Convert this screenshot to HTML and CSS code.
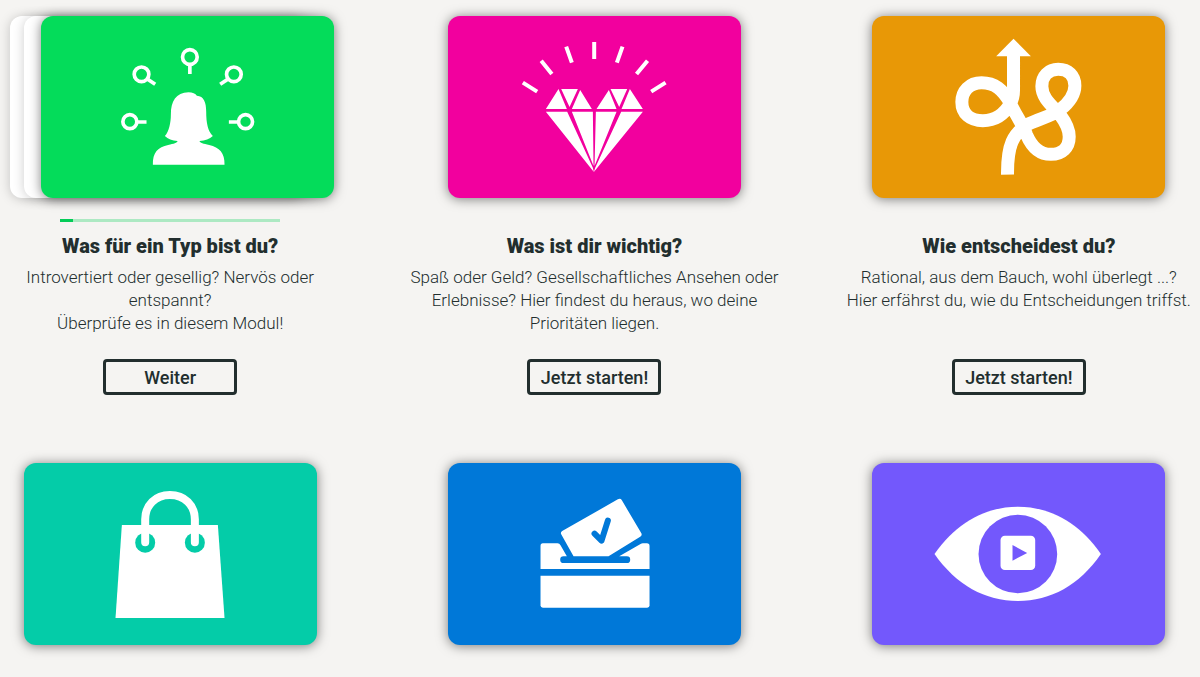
FILE: index.html
```html
<!doctype html>
<html lang="de">
<head>
    <meta charset="utf-8">
    <title>Module</title>
    <meta name="viewport" content="width=device-width, initial-scale=1">
    <link rel="stylesheet" href="styles.css">
</head>

<body>

<main class="modules">

    <section class="module">
        <div class="stack">
            <div class="sheet sheet-back"></div>
            <div class="sheet sheet-middle"></div>
            <div class="card card-type">
                <svg viewBox="123 48 876 546" aria-hidden="true">
                    <g fill="none" stroke="#fff" stroke-width="11">
                        <circle cx="568" cy="171" r="22"/>
                        <path d="M568 192V222"/>
                        <circle cx="423" cy="223" r="22"/>
                        <path d="M439 236L464 253"/>
                        <circle cx="700" cy="223" r="22"/>
                        <path d="M684 236L659 253"/>
                        <circle cx="388" cy="365" r="21"/>
                        <path d="M409 366H438"/>
                        <circle cx="735" cy="365" r="21"/>
                        <path d="M714 366H685"/>
                    </g>
                    <path fill="#fff" d="M457 494C456 458 472 441 503 435C520 431 530 429 531 423C515 422 502 417 493 408C505 394 511 368 511 344C511 304 526 278 564 277C576 277 585 281 589 287C610 288 617 307 617 335C617 369 622 393 637 408C627 417 614 422 597 423C598 429 609 431 626 435C657 442 673 459 672 494Z"/>
                </svg>
            </div>
        </div>
        <div class="progress" role="progressbar" aria-label="Fortschritt" aria-valuemin="0" aria-valuemax="100" aria-valuenow="6">
            <div class="progress-bar" style="width: 6%"></div>
        </div>
        <h2>Was für ein Typ bist du?</h2>
        <p>Introvertiert oder gesellig? Nervös oder entspannt?<br>Überprüfe es in diesem Modul!</p>
        <button type="button">Weiter</button>
    </section>

    <section class="module">
        <div class="card card-values">
            <svg viewBox="27 48 876 546" aria-hidden="true">
                <path fill="none" stroke="#fff" stroke-width="12" d="M464 126V177M380 140L397 188M549 140L532 188M305 182L337 222M624 182L591 222M250 248L293 275M678 248L635 275"/>
                <g fill="#fff">
                    <path d="M319 327L357 267L382 327ZM365 267H415L390 321ZM422 270L457 327H397ZM471 327L508 270L531 327ZM513 267H563L539 321ZM571 267L610 327H546Z"/>
                    <path d="M319 335H383L460 503L463 516ZM397 335H460L462 498ZM469 335H531L465 498ZM545 335H610L463 516L467 503Z"/>
                </g>
            </svg>
        </div>
        <div class="spacer"></div>
        <h2>Was ist dir wichtig?</h2>
        <p>Spaß oder Geld? Gesellschaftliches Ansehen oder Erlebnisse? Hier findest du heraus, wo deine Prioritäten liegen.</p>
        <button type="button">Jetzt starten!</button>
    </section>

    <section class="module">
        <div class="card card-decide">
            <svg viewBox="27 48 876 546" aria-hidden="true">
                <path fill="none" stroke="#fff" stroke-width="39" d="M432 524C431 436 448 399 497 371C530 355 562 349 590 329C620 305 634 282 634 257C634 227 614 208 584 208C555 208 535 228 535 259C535 296 568 318 590 345C608 369 617 387 617 410C617 442 596 463 562 463C526 463 504 439 489 404C478 374 454 341 440 308C417 268 394 248 354 248C318 248 295 273 295 306C295 341 320 362 358 362C397 362 424 340 440 311C447 299 450 289 450 270V160"/>
                <path fill="#fff" d="M450 116L502 169H398Z"/>
            </svg>
        </div>
        <div class="spacer"></div>
        <h2>Wie entscheidest du?</h2>
        <p>Rational, aus dem Bauch, wohl überlegt ...?<br>Hier erfährst du, wie du Entscheidungen triffst.</p>
        <button type="button">Jetzt starten!</button>
    </section>

    <section class="module">
        <div class="card card-shopping">
            <svg viewBox="42 39 876 546" aria-hidden="true">
                <path fill="#fff" d="M334 225H622L642 504H315Z"/>
                <circle cx="404" cy="278" r="30" fill="#04cca8"/>
                <circle cx="553" cy="278" r="30" fill="#04cca8"/>
                <path fill="#fff" d="M374 225H434V250H374ZM523 225H583V250H523Z"/>
                <path fill="none" stroke="#fff" stroke-width="24" stroke-linecap="round" d="M404 277V208C404 165 435 135 478 135C522 135 553 165 553 208V277"/>
            </svg>
        </div>
    </section>

    <section class="module">
        <div class="card card-vote">
            <svg viewBox="27 39 876 546" aria-hidden="true">
                <path fill="#fff" d="M310 280H354Q360 280 363 286L382 319H372A10 10 0 0 0 372 339H562A10 10 0 0 0 562 319H539L603 282Q606 280 610 280H622Q630 280 630 288V357H303V288Q303 280 310 280Z"/>
                <path fill="#fff" d="M303 377H630V466Q630 473 623 473H310Q303 473 303 466Z"/>
                <path fill="#fff" d="M402 319L365 253Q362 247 368 243L535 148Q543 144 547 151L605 249Q609 256 602 260L507 319Z"/>
                <path fill="none" stroke="#0078d8" stroke-width="18" stroke-linecap="round" stroke-linejoin="round" d="M465 251L486 272L505 212"/>
            </svg>
        </div>
    </section>

    <section class="module">
        <div class="card card-media">
            <svg viewBox="27 39 876 546" aria-hidden="true">
                <path fill="#fff" d="M213 312C278 219 365 170 463 170C561 170 648 219 712 312C648 405 561 453 463 453C365 453 278 405 213 312Z"/>
                <circle cx="463" cy="312" r="118" fill="#7358fc"/>
                <rect x="411" y="257" width="104" height="103" rx="13" fill="#fff"/>
                <path fill="#7358fc" d="M447 285L491 309L447 332Z"/>
            </svg>
        </div>
    </section>

</main>

</body>
</html>
```

FILE: styles.css
```css
* {
    box-sizing: border-box;
}

body {
    margin: 0;
    background: #f5f4f2;
    color: #222e2e;
    font-family: Roboto, sans-serif;
    overflow-x: hidden;
}

/* the grid bleeds over the page edges */
.modules {
    display: grid;
    grid-template-columns: repeat(3, minmax(0, 1fr));
    column-gap: 58px;
    row-gap: 68px;
    margin: 0 -2px 0 -13px;
    padding: 16px 0 32px;
}

.module {
    display: flex;
    flex-direction: column;
    align-items: center;
    text-align: center;
}

.card {
    width: 80%;
    aspect-ratio: 293 / 182;
    border-radius: 12px;
    box-shadow: 0 1px 12px rgba(0, 0, 0, .5);
    overflow: hidden;
}
.card svg {
    display: block;
    width: 100%;
    height: 100%;
}

.card-type {
    background: #04dc5a;
}
.card-values {
    background: #f2009e;
}
.card-decide {
    background: #e89806;
}
.card-shopping {
    background: #04cca8;
}
.card-vote {
    background: #0078d8;
}
.card-media {
    background: #7358fc;
}

/* card with white sheets lying behind it */
.stack {
    position: relative;
    width: 80%;
}
.stack .card {
    position: relative;
    left: 17px;
    width: 100%;
}
.sheet {
    position: absolute;
    top: 0;
    width: 100%;
    height: 100%;
    background: #fff;
    border-radius: 12px;
    box-shadow: 0 1px 12px rgba(0, 0, 0, .2);
}
.sheet-back {
    left: -14px;
}
.sheet-middle {
    left: 0;
}

.progress,
.spacer {
    width: 60%;
    height: 3px;
    margin: 21px 0 12px;
}
.progress {
    background: #ade9c3;
}
.progress-bar {
    height: 100%;
    background: #04cc58;
}

h2 {
    margin: 0 0 8px;
    font-size: 20px;
    font-weight: 900;
    line-height: 24px;
}

p {
    margin: 0 -2px 24px;
    min-height: 69px;
    font-size: 17px;
    font-weight: 300;
    line-height: 23px;
}

button {
    min-width: 134px;
    height: 36px;
    padding: 0 8px;
    border: 3px solid #222e2e;
    border-radius: 4px;
    background: transparent;
    color: inherit;
    font-family: inherit;
    font-size: 18px;
    font-weight: 500;
    cursor: pointer;
}
button:hover {
    background: #222e2e;
    color: #fff;
}
```
